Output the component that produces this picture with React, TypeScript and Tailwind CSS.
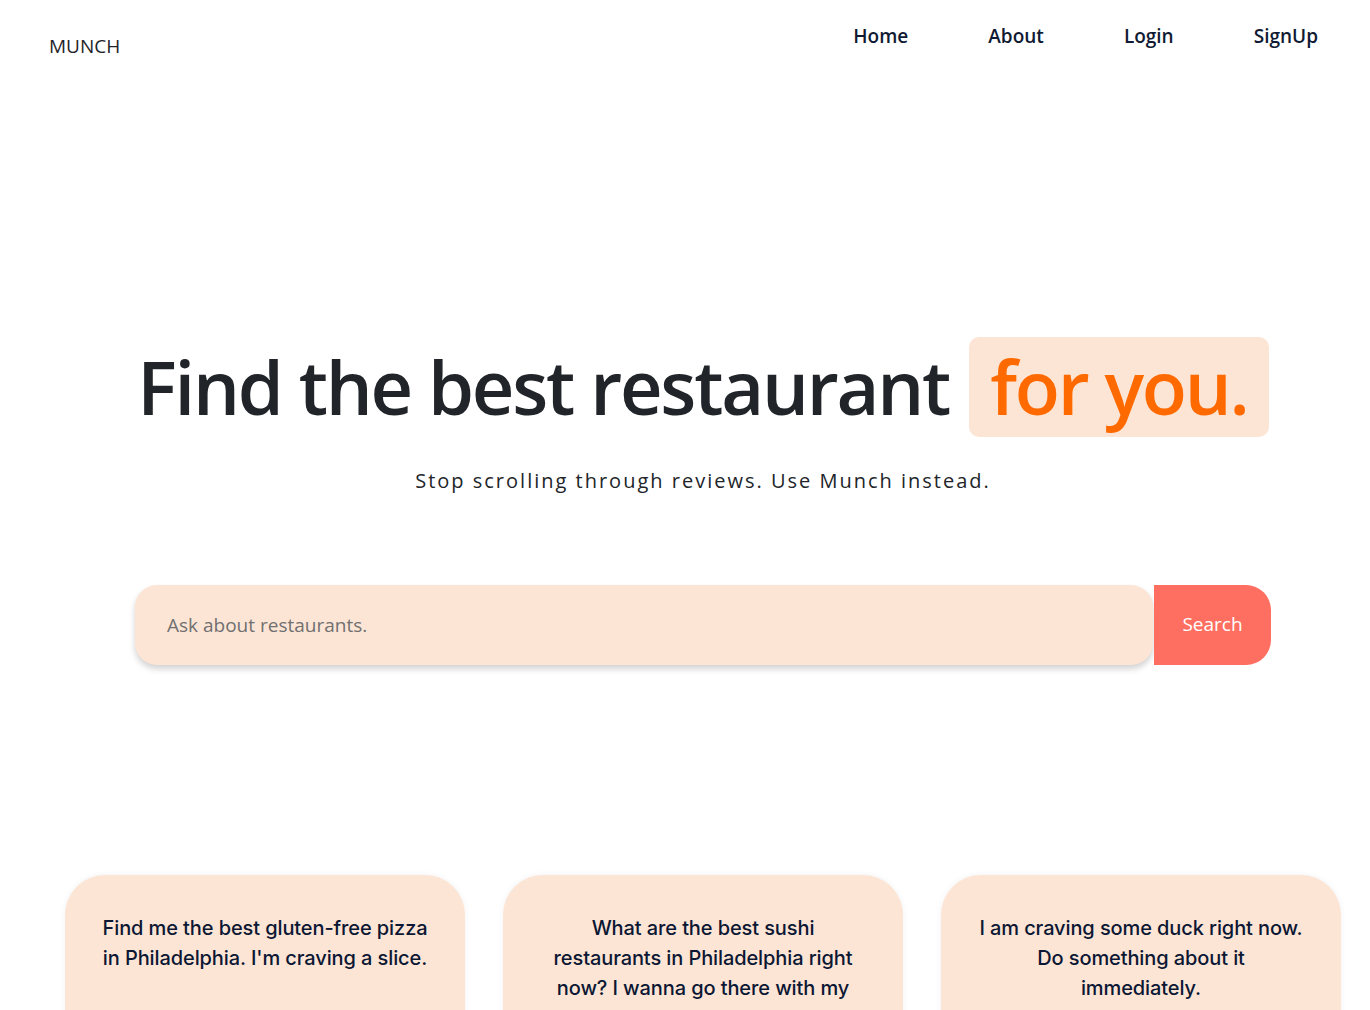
const suggestions = [
  ["Find me the best gluten-free pizza", "in Philadelphia. I'm craving a slice."],
  ["What are the best sushi", "restaurants in Philadelphia right", "now? I wanna go there with my"],
  ["I am craving some duck right now.", "Do something about it", "immediately."],
];

function Header() {
  return (
    <header className="flex items-start justify-between pl-[49px] pr-[52px]">
      <div className="pt-[32px] text-[19px] text-[#1f2328]">MUNCH</div>
      <nav className="flex gap-[80px] pt-[22px] text-[19px] font-semibold text-[#101a33]">
        <a>Home</a>
        <a>About</a>
        <a>Login</a>
        <a>SignUp</a>
      </nav>
    </header>
  );
}

function Hero() {
  return (
    <section className="flex flex-col items-center pl-[36px]">
      <h1 className="mt-[276px] flex items-center text-[74px] font-semibold leading-none tracking-[-2.2px] text-[#212529]">
        <span>Find the best restaurant</span>
        <span className="ml-[20px] flex h-[100px] items-center rounded-[10px] bg-[#fde5d6] px-[21px] text-[#ff6a00]">
          for you.
        </span>
      </h1>
      <p className="mt-[29px] text-[20px] tracking-[2px] text-[#212529]">
        Stop scrolling through reviews. Use Munch instead.
      </p>
      <div className="mt-[89px] flex w-[1136px]">
        <input
          className="h-[80px] flex-1 rounded-[22px] bg-[#fde5d6] px-[32px] text-[19px] text-[#333] shadow-[0_4px_6px_rgba(0,0,0,0.18)] outline-none placeholder:text-[#707070]"
          placeholder="Ask about restaurants."
        />
        <button className="ml-px h-[80px] w-[117px] rounded-r-[25px] bg-[#ff6f61] text-[19px] text-white">
          Search
        </button>
      </div>
    </section>
  );
}

function SuggestionCard({ lines }: { lines: string[] }) {
  return (
    <div className="h-[240px] w-[400px] rounded-[40px] bg-[#fde5d6] px-[30px] pt-[38px] text-center font-['Inter',sans-serif] text-[20px] font-medium leading-[30px] tracking-[-0.1px] text-[#0b1733] shadow-[0_0_6px_rgba(0,0,0,0.06)]">
      {lines.map(l => (
        <div key={l}>{l}</div>
      ))}
    </div>
  );
}

export default function App() {
  return (
    <div className="h-[1010px] overflow-hidden bg-white font-['Segoe_UI','Open_Sans',sans-serif]">
      <Header />
      <Hero />
      <div className="mt-[210px] flex justify-center gap-[38px] pl-[36px]">
        {suggestions.map(s => (
          <SuggestionCard key={s[0]} lines={s} />
        ))}
      </div>
    </div>
  );
}
